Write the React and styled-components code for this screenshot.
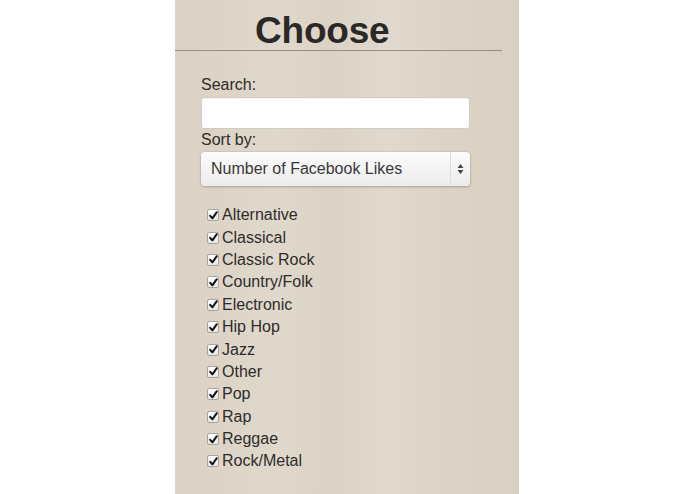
import React from "react";
import styled, { createGlobalStyle } from "styled-components";

const Global = createGlobalStyle`
  html, body { margin: 0; padding: 0; background: #ffffff; }
  body { font-family: "Liberation Sans", Arial, sans-serif; }
`;

const Panel = styled.div`
  margin-left: 175px;
  width: 344px;
  height: 494px;
  box-sizing: border-box;
  background: linear-gradient(
    90deg,
    #dcd3c6 0%,
    #ddd4c7 12%,
    #e0d8cc 30%,
    #dcd3c5 45%,
    #e1d9ce 62%,
    #ddd4c7 78%,
    #d9d0c2 100%
  );
  color: #2c2a28;
  overflow: hidden;
`;

const Header = styled.h1`
  margin: 0 17px 0 0;
  height: 51px;
  box-sizing: border-box;
  border-bottom: 1px solid #978e82;
  padding: 12px 0 0 80px;
  font-family: "Liberation Sans", Arial, sans-serif;
  font-weight: bold;
  font-size: 37px;
  line-height: 37px;
  color: #2a2927;
  letter-spacing: -0.2px;
`;

const Body = styled.div`
  padding: 25px 0 0 26px;
  display: flex;
  flex-direction: column;
`;

const Label = styled.label`
  font-size: 16px;
  line-height: 18px;
  color: #2e2c2a;
  margin-bottom: 3px;
`;

const TextInput = styled.input`
  width: 269px;
  height: 32px;
  box-sizing: border-box;
  border: 1px solid #d2ccc3;
  border-radius: 3px;
  background: #ffffff;
  box-shadow: inset 0 1px 1px rgba(0, 0, 0, 0.06);
  margin: 0 0 2px 0;
  outline: none;
`;

const Select = styled.div`
  width: 269px;
  height: 34px;
  box-sizing: border-box;
  border-radius: 4px;
  background: linear-gradient(#fbfbfb, #ececec);
  box-shadow: 0 1px 3px rgba(0, 0, 0, 0.22), 0 0 0 1px rgba(0, 0, 0, 0.04);
  display: flex;
  align-items: center;
`;

const SelectText = styled.span`
  flex: 1;
  padding-left: 10px;
  font-size: 16px;
  color: #3a3836;
`;

const Stepper = styled.span`
  width: 18px;
  height: 34px;
  margin-right: 1px;
  border-left: 1px solid #dedede;
  display: flex;
  align-items: center;
  justify-content: center;
`;

const List = styled.ul`
  list-style: none;
  margin: 18px 0 0 0;
  padding: 0 0 0 6px;
`;

const Row = styled.li`
  height: 22.4px;
  display: flex;
  align-items: center;
  font-size: 16px;
  color: #2e2c2a;
`;

const Box = styled.span`
  width: 12px;
  height: 12px;
  box-sizing: border-box;
  border: 1px solid #a8a49f;
  border-radius: 2px;
  background: linear-gradient(#ffffff, #e6e6e6);
  margin-right: 3px;
  display: flex;
  align-items: center;
  justify-content: center;
`;

const genres = [
  "Alternative",
  "Classical",
  "Classic Rock",
  "Country/Folk",
  "Electronic",
  "Hip Hop",
  "Jazz",
  "Other",
  "Pop",
  "Rap",
  "Reggae",
  "Rock/Metal",
];

export default function App() {
  return (
    <>
      <Global />
      <Panel>
        <Header>Choose</Header>
        <Body>
          <Label>Search:</Label>
          <TextInput type="text" />
          <Label>Sort by:</Label>
          <Select>
            <SelectText>Number of Facebook Likes</SelectText>
            <Stepper>
              <svg width="7" height="12" viewBox="0 0 7 12">
                <path d="M3.5 1 L6.5 5 L0.5 5 Z" fill="#444" />
                <path d="M3.5 11 L6.5 7 L0.5 7 Z" fill="#444" />
              </svg>
            </Stepper>
          </Select>
          <List>
            {genres.map((g) => (
              <Row key={g}>
                <Box>
                  <svg width="9" height="9" viewBox="0 0 9 9">
                    <path
                      d="M1.2 4.8 L3.4 7.3 L7.8 1.2"
                      stroke="#111"
                      strokeWidth="2"
                      fill="none"
                      strokeLinecap="round"
                      strokeLinejoin="round"
                    />
                  </svg>
                </Box>
                {g}
              </Row>
            ))}
          </List>
        </Body>
      </Panel>
    </>
  );
}
